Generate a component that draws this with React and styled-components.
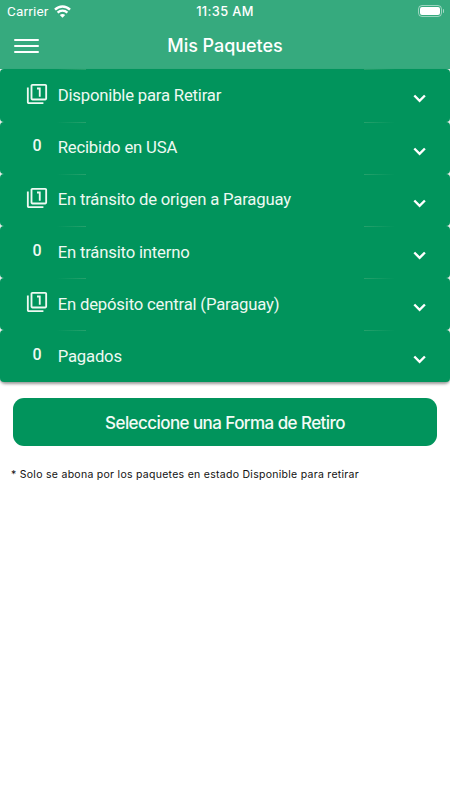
import React, { useState } from 'react';
import styled, { createGlobalStyle } from 'styled-components';
import { MdFilter1 } from 'react-icons/md';

const sections = [
  { title: 'Disponible para Retirar', count: 1 },
  { title: 'Recibido en USA', count: 0 },
  { title: 'En tránsito de origen a Paraguay', count: 1 },
  { title: 'En tránsito interno', count: 0 },
  { title: 'En depósito central (Paraguay)', count: 1 },
  { title: 'Pagados', count: 0 },
];

function WifiIcon() {
  return (
    <svg width="17" height="13" viewBox="0 0 17 13" fill="none" stroke="white">
      <path d="M1 4.7C5.2.5 11.8.5 16 4.7" strokeWidth="2.4" />
      <path d="M3.6 7.7c2.8-2.7 7-2.7 9.8 0" strokeWidth="2.3" />
      <path d="M5.8 10c1.5-1.5 3.9-1.5 5.4 0L8.5 12.8z" fill="white" stroke="none" />
    </svg>
  );
}

function ChevronIcon() {
  return (
    <svg width="24" height="24" viewBox="0 0 24 24" fill="none" stroke="white" strokeWidth="2.4">
      <path d="M6.3 9.5l5.3 5.3 5.3-5.3" />
    </svg>
  );
}

function StatusBar() {
  return (
    <Status>
      <Carrier>
        Carrier
        <WifiIcon />
      </Carrier>
      <Clock>11:35 AM</Clock>
      <BatteryWrap>
        <Battery />
        <BatteryTip />
      </BatteryWrap>
    </Status>
  );
}

function PackageRow({ title, count, isOpen, _onClick }) {
  return (
    <Row onClick={_onClick}>
      <Lead>{count > 0 ? <MdFilter1 size={22} /> : <Zero>{count}</Zero>}</Lead>
      <RowTitle>{title}</RowTitle>
      <Arrow $open={isOpen}>
        <ChevronIcon />
      </Arrow>
    </Row>
  );
}

function App() {
  const [selected, setSelected] = useState(null);

  return (
    <Screen>
      <GlobalStyle />
      <Header>
        <StatusBar />
        <NavBar>
          <MenuButton aria-label="menu">
            <MenuLine />
            <MenuLine />
            <MenuLine />
          </MenuButton>
          <Title>Mis Paquetes</Title>
        </NavBar>
      </Header>
      <List>
        {sections.map((s, i) => (
          <PackageRow
            key={s.title}
            title={s.title}
            count={s.count}
            isOpen={selected === i}
            _onClick={() => setSelected(selected === i ? null : i)}
          />
        ))}
      </List>
      <PickupButton>Seleccione una Forma de Retiro</PickupButton>
      <Note>* Solo se abona por los paquetes en estado Disponible para retirar</Note>
    </Screen>
  );
}

const GlobalStyle = createGlobalStyle`
body{
  margin:0;
  background:#ffffff;
  font-family:Roboto, sans-serif;
}
button{
  border:none;
  padding:0;
  font-family:inherit;
}
`
const Screen = styled.div`
width:100%;
height:800px;
box-sizing:border-box;
background:#ffffff;
display:flex;
flex-direction:column;
overflow:hidden;
`
const Header = styled.header`
height:69.4px;
flex-shrink:0;
background:#36aa7e;
color:white;
`
const Status = styled.div`
height:23px;
padding:0 6px 0 7px;
display:grid;
grid-template-columns:1fr auto 1fr;
align-items:center;
font-size:13.5px;
`
const Carrier = styled.div`
display:flex;
align-items:center;
gap:5px;
line-height:14px;
margin-top:-1px;
letter-spacing:0.18px;
`
const Clock = styled.div`
font-family:Inter, sans-serif;
font-size:12.8px;
font-weight:500;
letter-spacing:0.38px;
margin-left:-1px;
`
const BatteryWrap = styled.div`
display:flex;
align-items:center;
justify-content:flex-end;
gap:1px;
margin-top:-1px;
`
const Battery = styled.div`
width:24px;
height:12px;
box-sizing:border-box;
border:1px solid rgba(255,255,255,0.5);
border-radius:4px;
padding:1px;
&::before{
  content:"";
  display:block;
  width:20px;
  height:8px;
  border-radius:2px;
  background:white;
}
`
const BatteryTip = styled.div`
width:1px;
height:4px;
border-radius:0 2px 2px 0;
background:rgba(255,255,255,0.55);
`
const NavBar = styled.div`
height:46px;
padding:0 14px;
display:grid;
grid-template-columns:1fr auto 1fr;
align-items:center;
`
const MenuButton = styled.button`
width:25px;
background:none;
display:flex;
flex-direction:column;
gap:4.4px;
`
const MenuLine = styled.span`
width:25px;
height:2px;
border-radius:2px;
background:white;
`
const Title = styled.h1`
margin:-1px 0 0;
font-family:Inter, sans-serif;
font-size:18px;
font-weight:500;
letter-spacing:-0.05px;
`
const List = styled.div`
background:#e8ece9;
border-radius:0 0 5px 5px;
box-shadow:0 2px 3px rgba(0,0,0,0.4);
`
const Row = styled.div`
height:52.17px;
box-sizing:border-box;
padding:0 18px 0 26px;
display:flex;
align-items:center;
border-radius:4px;
color:#eef9f2;
cursor:pointer;
background:
  linear-gradient(to right, transparent, #26a16c) 57px 0 / 29px 1px no-repeat,
  linear-gradient(to left, transparent, #26a16c) 364px 0 / 31px 1px no-repeat,
  #01945c;
`
const Lead = styled.div`
width:22px;
height:22px;
margin-top:-3.8px;
display:flex;
align-items:center;
justify-content:center;
svg{
  display:block;
}
`
const Zero = styled.span`
font-size:16px;
font-weight:500;
`
const RowTitle = styled.div`
flex:1;
margin:1.4px 0 0 9.7px;
font-size:16.7px;
line-height:20px;
letter-spacing:-0.19px;
white-space:nowrap;
`
const Arrow = styled.div`
display:flex;
margin-top:6px;
color:white;
transform:${(props) => (props.$open ? 'rotate(180deg)' : 'none')};
`
const PickupButton = styled.button`
height:48px;
flex-shrink:0;
margin:15.6px 13px 0;
padding-top:2px;
border-radius:11px;
background:#01945c;
color:#f3fbf6;
font-family:Inter, sans-serif;
font-size:17px;
font-weight:500;
letter-spacing:-0.57px;
`
const Note = styled.p`
margin:20.7px 11px 0;
font-family:Inter, sans-serif;
font-size:10.5px;
line-height:16px;
letter-spacing:0.28px;
color:#111111;
white-space:nowrap;
`
export default App;
